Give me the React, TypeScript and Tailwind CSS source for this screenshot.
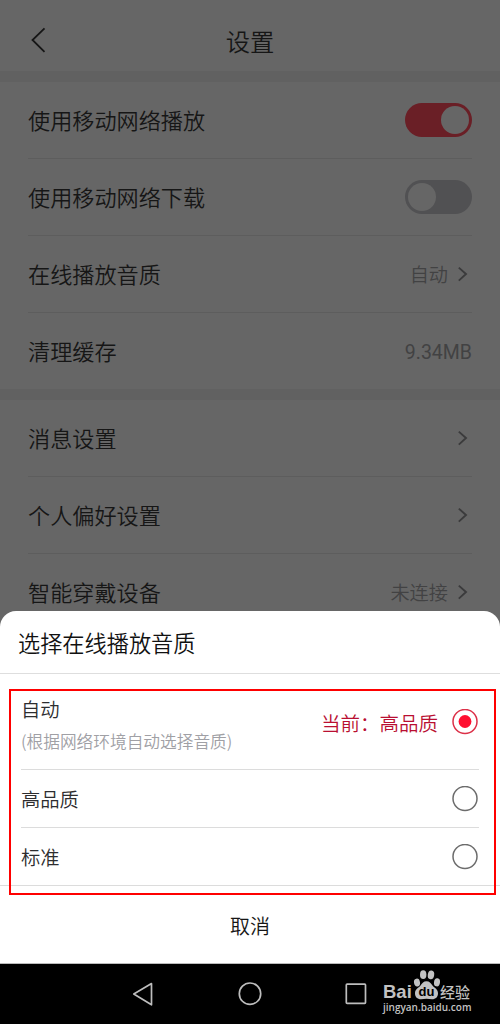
import type { ReactNode } from "react";

function Chevron() {
  return (
    <svg className="mr-1 ml-[9px] h-4 w-[11px]" viewBox="0 0 11 16" fill="none" stroke="#3b3b3c" strokeWidth="1.9">
      <path d="M1.800 1.600 9 8l-7.200 6.600" />
    </svg>
  );
}

function Toggle({ on }: { on?: boolean }) {
  return (
    <div
      className={
        on
          ? "flex h-[34px] w-[67px] items-center justify-end rounded-full bg-[#6a1f26] px-[3px]"
          : "flex h-[34px] w-[67px] items-center rounded-full bg-[#515153] px-[3px]"
      }
    >
      <div className="h-7 w-7 rounded-full bg-[#666]" />
    </div>
  );
}

function Row({ label, last, children }: { label: string; last?: boolean; children?: ReactNode }) {
  return (
    <div
      className={
        last
          ? "mx-7 flex h-[76px] items-center justify-between"
          : "mx-7 flex h-[77px] items-center justify-between border-b border-[#5d5d5d]"
      }
    >
      <span className="text-[22.15px] text-[#161616]">{label}</span>
      <div className="flex items-center text-[19.2px] text-[#424243]">{children}</div>
    </div>
  );
}

function Radio({ checked }: { checked?: boolean }) {
  return (
    <svg className="mr-px size-[26px]" viewBox="0 0 26 26" fill="none">
      <circle cx="13" cy="12.500" r="12" stroke={checked ? "#dc3048" : "#6c6c6c"} strokeWidth="1.5" />
      {checked && <circle cx="13" cy="12.500" r="6.400" fill="#ff0f30" />}
    </svg>
  );
}

function Watermark() {
  return (
    <div className="absolute top-[5px] left-[383px] h-[46px] w-[92px] text-[#c2c2c2]">
      <span className="absolute top-[15px] left-0 font-['Liberation_Sans'] text-[18.5px] leading-4 font-bold">
        Bai
      </span>
      <svg className="absolute top-0 left-[29px] h-[34px] w-[29px]" viewBox="0 0 29 34" fill="currentColor">
        <ellipse cx="5" cy="13.600" rx="3" ry="4" transform="rotate(-10 5 13.600)" />
        <ellipse cx="11.200" cy="5.700" rx="3.200" ry="4.400" />
        <ellipse cx="19" cy="5.900" rx="3.200" ry="4.400" transform="rotate(8 19 5.900)" />
        <ellipse cx="25" cy="13.300" rx="3" ry="4.100" transform="rotate(8 25 13.300)" />
        <path d="M14.500 12.200c-3 0-4.200 1.800-5.800 4C6.900 18.700 3 19.700 3 24.200c0 3.700 2.300 6 6 6 1.900 0 3.600-.4 5.500-.4s3.600.4 5.500.4c3.700 0 6-2.300 6-6 0-4.500-3.900-5.500-5.700-8-1.600-2.200-2.800-4-5.800-4Z" />
      </svg>
      <span className="absolute top-[16px] left-[35.500px] font-['Liberation_Sans'] text-[13px] leading-[14px] font-bold text-black">
        du
      </span>
      <span className="absolute top-[15px] left-[57px] text-[15px] leading-4 font-medium">经验</span>
      <span className="absolute top-[32px] left-0 font-['Open_Sans'] text-[10px] leading-3 font-semibold">
        jingyan.baidu.com
      </span>
    </div>
  );
}

export default function App() {
  return (
    <div className="relative flex h-[1024px] w-[500px] flex-col overflow-hidden bg-[#666] font-['Noto_Sans_CJK_SC',sans-serif] font-[350] whitespace-nowrap">
      <header className="relative flex h-[71px] shrink-0 items-center justify-center pt-[11px]">
        <svg
          className="absolute top-[27px] left-[30px] h-[26px] w-4"
          viewBox="0 0 16 26"
          fill="none"
          stroke="#161616"
          strokeWidth="1.8"
        >
          <path d="M14.500 1.300 2.500 13l12 11.800" />
        </svg>
        <h1 className="text-[24.3px] text-[#161616]">设置</h1>
      </header>
      <div className="h-[11px] shrink-0 bg-[#616161]" />
      <section>
        <Row label="使用移动网络播放">
          <Toggle on />
        </Row>
        <Row label="使用移动网络下载">
          <Toggle />
        </Row>
        <Row label="在线播放音质">
          自动
          <Chevron />
        </Row>
        <Row label="清理缓存" last>
          <span className="pt-[3px] font-[Roboto] text-[19.5px] font-normal">9.34MB</span>
        </Row>
      </section>
      <div className="h-[11px] shrink-0 bg-[#616161]" />
      <section>
        <Row label="消息设置">
          <Chevron />
        </Row>
        <Row label="个人偏好设置">
          <Chevron />
        </Row>
        <Row label="智能穿戴设备" last>
          未连接
          <Chevron />
        </Row>
      </section>

      <div className="absolute inset-x-0 bottom-0">
        <section className="relative h-[353px] rounded-t-[16px] border-b border-[#bbb] bg-white">
          <h2 className="flex h-[63px] items-center border-b border-[#dedede] pt-px pl-[18px] text-[22.2px] text-[#111]">
            选择在线播放音质
          </h2>
          <div className="mx-[21px] flex h-24 items-center justify-between border-b border-[#dcdcdc]">
            <div className="pt-[7px]">
              <div className="text-[19.3px] leading-8 text-[#2d2d2f]">自动</div>
              <div className="text-[16.700px] leading-8 text-[#a0a0a5]">(根据网络环境自动选择音质)</div>
            </div>
            <div className="flex items-center gap-[14px] text-[19.5px] text-[#b90f32]">
              <span className="pt-0.5">当前：高品质</span>
              <Radio checked />
            </div>
          </div>
          <div className="mx-[21px] flex h-[58px] items-center justify-between border-b border-[#dcdcdc]">
            <span className="pt-0.5 text-[19.3px] text-[#2d2d2f]">高品质</span>
            <Radio />
          </div>
          <div className="flex h-[58px] items-center justify-between border-b border-[#dcdcdc] px-[21px]">
            <span className="pt-0.5 text-[19.3px] text-[#2d2d2f]">标准</span>
            <Radio />
          </div>
          <button className="block h-[77px] w-full pt-[3px] text-[20px] text-[#161616]">取消</button>
          <div className="pointer-events-none absolute top-[78px] left-[9px] h-[206px] w-[487px] border-2 border-[#ff0000]" />
        </section>
        <nav className="relative h-[60px] bg-black">
          <svg className="h-full w-full" viewBox="0 0 500 60" fill="none" stroke="#bdbdbd" strokeWidth="1.700">
            <path d="M151.500 19.600v21.200L133.800 30Z" strokeLinejoin="round" />
            <circle cx="250" cy="29.700" r="10.700" />
            <rect x="346.300" y="20.200" width="19.200" height="19.200" rx="0.800" />
          </svg>
          <Watermark />
        </nav>
      </div>
    </div>
  );
}
